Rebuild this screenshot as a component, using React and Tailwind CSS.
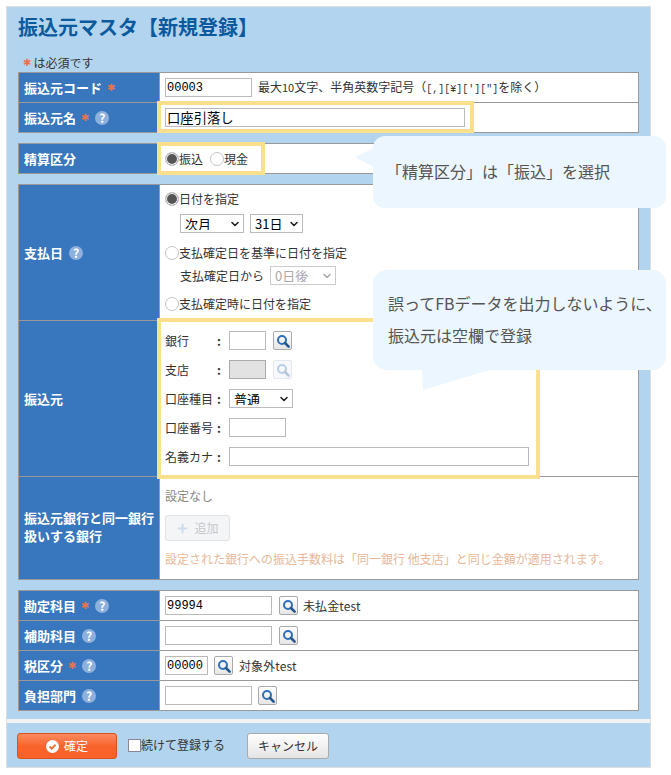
import React from "react";
import { ChevronDown, Plus } from "lucide-react";

const inputBase =
  "h-[19px] border outline-none text-black font-['Liberation_Mono','Noto_Sans_CJK_JP',monospace] text-[12px] leading-none pl-px";
const inputCls = `${inputBase} border-[#bbb] bg-white`;
const half = "font-['Liberation_Mono',monospace] text-[10px]";

function Help() {
  return (
    <span className="ml-px inline-flex h-[14px] w-[14px] shrink-0 items-center justify-center rounded-full bg-[#8db0de] text-[12px] font-bold leading-none text-white">
      ?
    </span>
  );
}

function Req() {
  return <span className="text-[10px] font-bold leading-none text-[#e8744f] font-['DejaVu_Sans',sans-serif]">✱</span>;
}

function SearchBtn({ disabled }) {
  return (
    <button
      type="button"
      className={
        disabled
          ? "flex h-[19px] w-[19px] shrink-0 items-center justify-center rounded-[2px] border border-[#e4e8ee] bg-[#f6f8fb]"
          : "flex h-[19px] w-[19px] shrink-0 items-center justify-center rounded-[2px] border border-[#aaa] bg-gradient-to-b from-white to-[#e6e6e6]"
      }
    >
      <svg width="14" height="14" viewBox="0 0 14 14" fill="none" className={disabled ? "opacity-30" : ""}>
        <circle cx="6" cy="6" r="4" stroke="#2f71b8" strokeWidth="2" />
        <path d="M9 9l3.6 3.6" stroke="#24588f" strokeWidth="2.6" strokeLinecap="round" />
      </svg>
    </button>
  );
}

function Select({ w, children, disabled }) {
  return (
    <span className={`relative inline-block h-[19px] ${w}`}>
      <select
        disabled={disabled}
        className={`h-full w-full appearance-none border bg-white pl-[4px] text-[13px] leading-none outline-none ${
          disabled ? "border-[#ccc] text-[#aaa]" : "border-[#bbb] text-black"
        }`}
      >
        {children}
      </select>
      <ChevronDown
        size={12}
        strokeWidth={3.2}
        className={`pointer-events-none absolute right-[3px] top-[4px] ${disabled ? "text-[#aaa]" : "text-[#222]"}`}
      />
    </span>
  );
}

function Radio({ name, checked, label, className = "" }) {
  return (
    <label className={`flex items-center ${className}`}>
      <input
        type="radio"
        name={name}
        defaultChecked={checked}
        className="h-[14px] w-[14px] appearance-none rounded-full border border-[#c4c4c4] bg-white checked:bg-[#555] checked:shadow-[inset_0_0_0_1px_#fff]"
      />
      <span>{label}</span>
    </label>
  );
}

function Row({ label, h, children, cellClass = "", last }) {
  return (
    <div className={`flex ${h} ${last ? "" : "border-b border-[#999]"}`}>
      <div className="flex w-[141px] shrink-0 items-center gap-[5px] border-r border-[#999] bg-[#3877bd] pl-[5px] text-[13px] font-bold leading-[18px] text-white">
        {label}
      </div>
      <div className={`relative min-w-0 flex-1 bg-white pl-[5px] ${cellClass}`}>{children}</div>
    </div>
  );
}

function Field({ label, children }) {
  return (
    <div className="flex h-[29px] items-center">
      <span className="w-[52px]">{label}</span>
      <span className="w-[12px] font-bold">:</span>
      {children}
    </div>
  );
}

function Highlight({ className }) {
  return <div className={`pointer-events-none absolute z-10 border-[4px] border-[#fae08c] ${className}`} />;
}

export default function App() {
  return (
    <div className="relative min-h-[775px] bg-white pl-[6px] pt-[6px] text-[12px] text-[#333] font-['Noto_Sans_CJK_JP','Liberation_Sans',sans-serif]">
      <div className="h-[762px] w-[645px] border border-[#ddd] bg-[#b3d4ee]">
        <div className="px-[11px]">
          <h1 className="flex h-[42px] items-center pb-[3px] text-[20px] font-bold leading-none text-[#0b5a9e]">
            振込元マスタ【新規登録】
          </h1>
          <div className="flex h-[23px] items-center gap-[2px] pl-[5px] pt-[4px]">
            <Req />
            <span>は必須です</span>
          </div>

          <div className="border-x border-t border-[#999]">
            <Row label={<><span>振込元コード</span><Req /></>} h="h-[30px]" cellClass="flex items-center gap-[6px]">
              <input className={`${inputCls} w-[87px]`} defaultValue="00003" />
              <span className="text-[12px]">
                最大<span className="text-[11px]">10</span>文字、半角英数字記号（<span className={half}>[,][¥]['][&quot;]</span>を除く）
              </span>
            </Row>
            <Row label={<><span>振込元名</span><Req /><Help /></>} h="h-[30px]" cellClass="flex items-center">
              <input className={`${inputCls} w-[300px] text-[13.33px] font-['Noto_Sans_CJK_JP',sans-serif]`} defaultValue="口座引落し" />
              <Highlight className="-left-[3px] -top-[2px] h-[32px] w-[317px]" />
            </Row>
          </div>

          <div className="mt-[10px] border-x border-t border-[#999]">
            <Row label="精算区分" h="h-[30px]" cellClass="flex items-center">
              <Radio name="seisan" checked label="振込" />
              <Radio name="seisan" label="現金" className="ml-[7px]" />
              <Highlight className="-left-[3px] -top-[2px] h-[33px] w-[108px]" />
            </Row>
          </div>

          <div className="mt-[10px] border-x border-t border-[#999]">
            <Row label={<><span>支払日</span><Help /></>} h="h-[136px]" cellClass="flex flex-col">
              <Radio name="pay" checked label="日付を指定" className="mt-[5px] h-[17px]" />
              <div className="ml-[15px] mt-[7px] flex gap-[6px]">
                <Select w="w-[64px]"><option>次月</option></Select>
                <Select w="w-[53px]"><option>31日</option></Select>
              </div>
              <Radio name="pay" label="支払確定日を基準に日付を指定" className="mt-[11px] h-[17px]" />
              <div className="ml-[15px] mt-[5px] flex items-center gap-[6px]">
                <span>支払確定日から</span>
                <Select w="w-[66px]" disabled><option>0日後</option></Select>
              </div>
              <Radio name="pay" label="支払確定時に日付を指定" className="mt-[10px] h-[17px]" />
            </Row>
            <Row label="振込元" h="h-[156px]" cellClass="pt-[5px]">
              <Field label="銀行">
                <input className={`${inputCls} w-[37px]`} />
                <span className="ml-[7px]"><SearchBtn /></span>
              </Field>
              <Field label="支店">
                <input disabled className={`${inputBase} w-[37px] border-[#aaa] bg-[#e2e2e2]`} />
                <span className="ml-[7px]"><SearchBtn disabled /></span>
              </Field>
              <Field label="口座種目">
                <Select w="w-[64px]"><option>普通</option></Select>
              </Field>
              <Field label="口座番号">
                <input className={`${inputCls} w-[57px]`} />
              </Field>
              <Field label="名義カナ">
                <input className={`${inputCls} w-[300px]`} />
              </Field>
              <Highlight className="-left-[3px] -top-[3px] h-[161px] w-[383px]" />
            </Row>
            <Row label={<span className="-mt-[3px]">振込元銀行と同一銀行<br />扱いする銀行</span>} h="h-[103px]">
              <div className="mt-[10px] text-[#888]">設定なし</div>
              <button
                type="button"
                className="mt-[10px] flex h-[26px] w-[65px] items-center justify-center gap-[5px] rounded-[3px] border border-[#e2e2e2] bg-[#f4f5f6] text-[#c4c8cc]"
              >
                <Plus size={13} strokeWidth={4} className="text-[#cfdcec]" />
                追加
              </button>
              <div className="mt-[9px] text-[#e8b898]">設定された銀行への振込手数料は「同一銀行 他支店」と同じ金額が適用されます。</div>
            </Row>
          </div>

          <div className="mt-[10px] border-x border-t border-[#999]">
            <Row label={<><span>勘定科目</span><Req /><Help /></>} h="h-[30px]" cellClass="flex items-center">
              <input className={`${inputCls} w-[107px]`} defaultValue="99994" />
              <span className="ml-[7px]"><SearchBtn /></span>
              <span className="ml-[5px] tracking-[0.1px]">未払金test</span>
            </Row>
            <Row label={<><span>補助科目</span><Help /></>} h="h-[30px]" cellClass="flex items-center">
              <input className={`${inputCls} w-[107px]`} />
              <span className="ml-[7px]"><SearchBtn /></span>
            </Row>
            <Row label={<><span>税区分</span><Req /><Help /></>} h="h-[30px]" cellClass="flex items-center">
              <input className={`${inputCls} w-[43px]`} defaultValue="00000" />
              <span className="ml-[6px]"><SearchBtn /></span>
              <span className="ml-[6px] tracking-[0.1px]">対象外test</span>
            </Row>
            <Row label={<><span>負担部門</span><Help /></>} h="h-[30px]" cellClass="flex items-center">
              <input className={`${inputCls} w-[87px]`} />
              <span className="ml-[6px]"><SearchBtn /></span>
            </Row>
          </div>
        </div>

        <div className="mt-[8px] h-[4px] bg-[#f2f2f2]" />

        <div className="flex items-start pl-[10px] pt-[10px]">
          <button
            type="button"
            className="flex h-[26px] w-[100px] items-center justify-center gap-[5px] rounded-[3px] border border-[#d9531e] bg-gradient-to-b from-[#fb8a5e] via-[#f9632b] to-[#f9612a] text-white"
          >
            <svg width="13" height="13" viewBox="0 0 13 13">
              <circle cx="6.5" cy="6.5" r="6.5" fill="#fff" />
              <path d="M3.5 6.5l2.2 2.2 3.8-4" fill="none" stroke="#f4743c" strokeWidth="2" />
            </svg>
            確定
          </button>
          <label className="ml-[11px] mt-[3px] flex items-center">
            <input type="checkbox" className="h-[13px] w-[13px] appearance-none border border-[#889] bg-white" />
            <span>続けて登録する</span>
          </label>
          <button
            type="button"
            className="ml-[22px] h-[26px] w-[82px] rounded-[3px] border border-[#aaa] bg-gradient-to-b from-white to-[#e4e4e4] text-[#333]"
          >
            キャンセル
          </button>
        </div>
      </div>

      <div className="absolute left-[373px] top-[136px] z-20 flex h-[72px] w-[293px] items-center rounded-[12px] bg-[#ebf6fe] pb-[2px] pl-[13px] text-[16px] text-[#555]">
        <svg width="19" height="24" viewBox="0 0 19 24" className="absolute -left-[18px] top-[9px]">
          <path d="M19 3L0 12l19 10z" fill="#ebf6fe" />
        </svg>
        「精算区分」は「振込」を選択
      </div>

      <div className="absolute left-[373px] top-[270px] z-20 flex h-[100px] w-[293px] flex-col justify-center rounded-[14px] bg-[#ebf6fe] pb-[2px] pl-[15px] text-[16px] leading-[32px] text-[#555]">
        <svg width="74" height="22" viewBox="0 0 74 22" className="absolute left-[49px] top-[99px]">
          <path d="M0 0l1 21L71 0z" fill="#ebf6fe" />
        </svg>
        <span className="whitespace-nowrap">誤ってFBデータを出力しないように、</span>
        <span>振込元は空欄で登録</span>
      </div>
    </div>
  );
}
